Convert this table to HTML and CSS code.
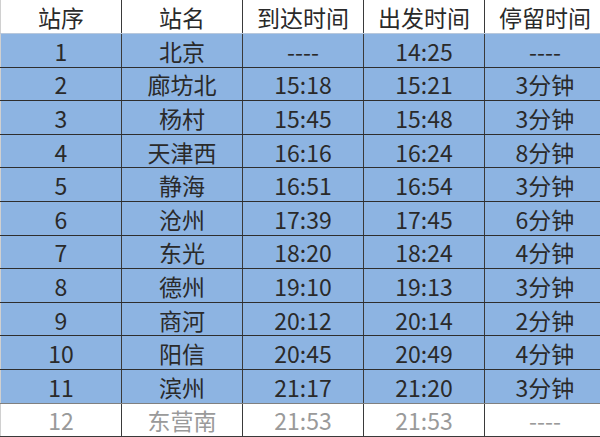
FILE: index.html
```html
<!DOCTYPE html>
<html>
<head>
<meta charset="utf-8">
<link rel="stylesheet" href="styles.css">
</head>
<body>
<table class="timetable">
  <thead>
    <tr class="head"><th>站序</th><th>站名</th><th>到达时间</th><th>出发时间</th><th>停留时间</th></tr>
  </thead>
  <tbody>
    <tr class="row"><td>1</td><td>北京</td><td>----</td><td>14:25</td><td>----</td></tr>
    <tr class="row"><td>2</td><td>廊坊北</td><td>15:18</td><td>15:21</td><td>3分钟</td></tr>
    <tr class="row"><td>3</td><td>杨村</td><td>15:45</td><td>15:48</td><td>3分钟</td></tr>
    <tr class="row"><td>4</td><td>天津西</td><td>16:16</td><td>16:24</td><td>8分钟</td></tr>
    <tr class="row"><td>5</td><td>静海</td><td>16:51</td><td>16:54</td><td>3分钟</td></tr>
    <tr class="row"><td>6</td><td>沧州</td><td>17:39</td><td>17:45</td><td>6分钟</td></tr>
    <tr class="row"><td>7</td><td>东光</td><td>18:20</td><td>18:24</td><td>4分钟</td></tr>
    <tr class="row"><td>8</td><td>德州</td><td>19:10</td><td>19:13</td><td>3分钟</td></tr>
    <tr class="row"><td>9</td><td>商河</td><td>20:12</td><td>20:14</td><td>2分钟</td></tr>
    <tr class="row"><td>10</td><td>阳信</td><td>20:45</td><td>20:49</td><td>4分钟</td></tr>
    <tr class="row last-blue"><td>11</td><td>滨州</td><td>21:17</td><td>21:20</td><td>3分钟</td></tr>
    <tr class="row future"><td>12</td><td>东营南</td><td>21:53</td><td>21:53</td><td>----</td></tr>
  </tbody>
</table>
</body>
</html>
```
FILE: styles.css
```css
html, body {
  margin: 0;
  padding: 0;
  background: #ffffff;
}
.timetable {
  width: 600px;
  border-collapse: collapse;
  table-layout: fixed;
  font-family: "Noto Sans CJK SC", "Noto Sans", sans-serif;
  font-size: 23px;
  color: #2a2a2a;
}
.timetable tr {
  height: 33.6px;
}
.timetable th,
.timetable td {
  width: 120px;
  padding: 2px 0 0 0;
  text-align: center;
  vertical-align: middle;
  font-weight: normal;
  line-height: 1;
  border-left: 1px solid #3a3a3a;
  border-bottom: 1px solid #2e2e2e;
}
.timetable th:first-child,
.timetable td:first-child {
  border-left: 1px solid #d0d0d0;
}
.timetable th:last-child,
.timetable td:last-child {
  border-right: 1px solid #3a3a3a;
}
.head th {
  background: #ffffff;
  border-bottom: 1px solid #b8c8dc;
}
.row td {
  background: #8db4e2;
}
.last-blue td {
  border-bottom: 1px solid #808080;
}
.future td {
  background: #ffffff;
  color: #9a9a9a;
  border-bottom: 1px solid #3a3a3a;
}
```
